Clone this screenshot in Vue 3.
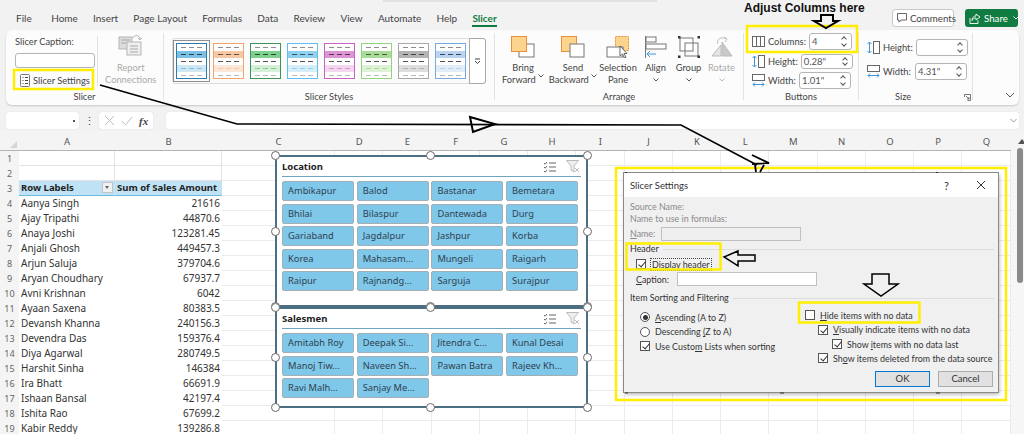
<script setup>
const tabs = ['File','Home','Insert','Page Layout','Formulas','Data','Review','View','Automate','Help','Slicer']
const thumbs = [
  { b:'#2e7aa8', f:'#7cc0e4', p:'#cfe6f3', d:'#1f3f55' },
  { b:'#f0a46e', f:'#f6c8a6', p:'#fbe6d8', d:'#6b4a35' },
  { b:'#3f9358', f:'#7fcf8e', p:'#d5efd9', d:'#1e4a2b' },
  { b:'#62bdee', f:'#8fd0ee', p:'#d6eefa', d:'#2d5870' },
  { b:'#c863c0', f:'#dc94d3', p:'#f3d7ef', d:'#5c2c58' },
  { b:'#93d27f', f:'#aadb9b', p:'#dff2d8', d:'#3d6331' },
  { b:'#a8a8a8', f:'#b4b4b4', p:'#dddddd', d:'#444444' },
  { b:'#7aa9dd', f:'#bcd3ef', p:'#e2ecf8', d:'#2e3f66' }
]
const columns = ['A','B','C','D','E','F','G','H','I','J','K','L','M','N','O','P','Q']
const emptyCols = columns.slice(2)
const rows = [
  ['',''],['',''],['Row Labels','Sum of Sales Amount'],
  ['Aanya Singh','21616'],['Ajay Tripathi','44870.6'],['Anaya Joshi','123281.45'],
  ['Anjali Ghosh','449457.3'],['Arjun Saluja','379704.6'],['Aryan Choudhary','67937.7'],
  ['Avni Krishnan','6042'],['Ayaan Saxena','80383.5'],['Devansh Khanna','240156.3'],
  ['Devendra Das','159376.4'],['Diya Agarwal','280749.5'],['Harshit Sinha','146384'],
  ['Ira Bhatt','66691.9'],['Ishaan Bansal','42197.4'],['Ishita Rao','67699.2'],['Kabir Reddy','139286.8']
]
const handles = ['tl','tc','tr','ml','mr','bl','bc','br']
const slicers = [
  { title:'Location', cls:'s-loc', items:['Ambikapur','Balod','Bastanar','Bemetara','Bhilai','Bilaspur','Dantewada','Durg','Gariaband','Jagdalpur','Jashpur','Korba','Korea','Mahasam...','Mungeli','Raigarh','Raipur','Rajnandg...','Sarguja','Surajpur'] },
  { title:'Salesmen', cls:'s-sal', items:['Amitabh Roy','Deepak Si...','Jitendra C...','Kunal Desai','Manoj Tiw...','Naveen Sh...','Pawan Batra','Rajeev Kh...','Ravi Malh...','Sanjay Me...'] }
]
</script>

<template>
  <div class="app">
    <div class="search-edge"></div>
    <div class="tabs">
      <span v-for="t in tabs" :key="t" class="tab" :class="{ active: t === 'Slicer', first: t === 'File' }">{{ t }}</span>
      <div class="top-actions">
        <span class="comments">
          <svg width="10" height="10" viewBox="0 0 10 10"><path d="M.5.500h9v6.500H4L2 9.200V7H.5z" fill="none" stroke="#555" stroke-width=".9"/></svg>
          Comments
        </span>
        <span class="share">
          <svg width="12" height="11" viewBox="0 0 12 11"><path d="M1 5v5.500h8V7.500M3 7.500c0-3 2-4.500 4-4.500V1l4 3-4 3V5C5 5 4 6 3 7.500z" fill="none" stroke="#fff" stroke-width=".9"/></svg>
          Share
          <svg class="share-caret" width="6" height="4" viewBox="0 0 6 4"><path d="M.5.500 3 3l2.500-2.500" fill="none" stroke="#fff"/></svg>
        </span>
      </div>
    </div>

    <div class="ribbon">
      <section class="group g-slicer">
        <div class="body slicer-body">
          <div class="caption-col">
            <div class="r-text">Slicer Caption:</div>
            <div class="caption-input"></div>
            <div class="settings-btn">
              <svg width="10" height="13" viewBox="0 0 10 13"><rect x=".5" y=".5" width="9" height="12" rx="1" fill="#fff" stroke="#777"/><path d="M2.500 3.500h1M5 3.500h3M2.500 6.500h1M5 6.500h3M2.500 9.500h1M5 9.500h3" stroke="#444"/></svg>
              <span class="r-text">Slicer Settings</span>
            </div>
          </div>
          <div class="report">
            <svg width="25" height="24" viewBox="0 0 25 24"><rect x="1" y="4" width="13" height="12" fill="#ddd" stroke="#b5b5b5"/><rect x="9" y="9" width="14" height="13" fill="#eee" stroke="#b5b5b5"/><path d="M3 7h9M3 10h5M12 13h8M12 16h8M12 19h8" stroke="#aaa"/><path d="M15 5c2-4 7-3 7 2M20 5l2 2 2-2" fill="none" stroke="#b5b5b5"/></svg>
            <span class="r-text dim">Report</span>
            <span class="r-text dim">Connections</span>
          </div>
        </div>
        <div class="g-label">Slicer</div>
      </section>

      <section class="group g-styles">
        <div class="body">
          <div class="gallery">
            <div v-for="(t, i) in thumbs" :key="i" class="thumb" :class="{ sel: i === 0 }">
              <svg width="31" height="36" viewBox="0 0 31 36">
                <rect x=".5" y=".5" width="30" height="35" fill="#fff" :stroke="t.b"/>
                <rect x="1" y="8" width="29" height="7" :fill="t.f"/>
                <rect x="1" y="22" width="29" height="7" :fill="t.p"/>
                <path d="M5 4.500h5M13 4.500h5M21 4.500h5" stroke="#8d8d8d"/>
                <path d="M5 11.500h5M13 11.500h5M21 11.500h5" :stroke="t.d"/>
                <path d="M5 18.500h5M13 18.500h5M21 18.500h5" stroke="#555"/>
                <path d="M5 25.500h5M13 25.500h5M21 25.500h5" :stroke="t.f"/>
                <path d="M5 32.500h5M13 32.500h5M21 32.500h5" stroke="#bbb"/>
              </svg>
            </div>
            <div class="gal-more">
              <svg width="7" height="7" viewBox="0 0 7 7"><path d="M1 1h5M1 3l2.500 2.500L6 3" fill="none" stroke="#444"/></svg>
            </div>
          </div>
        </div>
        <div class="g-label">Slicer Styles</div>
      </section>

      <section class="group g-arrange">
        <div class="body arrange-body">
          <div class="tool w-bring">
            <svg width="24" height="22" viewBox="0 0 24 22"><rect x="8" y="8" width="15" height="13" fill="#fff" stroke="#777"/><rect x=".5" y=".5" width="15" height="15" fill="#fcd48e" stroke="#e8913a"/></svg>
            <span class="r-text">Bring</span>
            <span class="r-text">Forward <svg class="chev" width="6" height="4" viewBox="0 0 6 4"><path d="M.5.500 3 3l2.500-2.500" fill="none" stroke="#555"/></svg></span>
          </div>
          <div class="tool w-send">
            <svg width="24" height="22" viewBox="0 0 24 22"><rect x=".5" y=".5" width="15" height="15" fill="#fcd48e" stroke="#e8913a"/><rect x="9" y="8" width="14" height="13" fill="#fff" stroke="#777"/></svg>
            <span class="r-text">Send</span>
            <span class="r-text">Backward <svg class="chev" width="6" height="4" viewBox="0 0 6 4"><path d="M.5.500 3 3l2.500-2.500" fill="none" stroke="#555"/></svg></span>
          </div>
          <div class="tool w-sel">
            <svg width="24" height="22" viewBox="0 0 24 22"><rect x="9.500" y=".5" width="13" height="14" fill="#fcd48e" stroke="#e8913a" stroke-dasharray="2 1"/><rect x="1" y="11" width="16" height="10" fill="#fff" stroke="#777"/><path d="M14 10v10l2.500-2 2 4 1.500-.8-2-3.700h3z" fill="#fff" stroke="#444" stroke-width=".8"/></svg>
            <span class="r-text">Selection</span>
            <span class="r-text">Pane</span>
          </div>
          <div class="tool w-small">
            <svg width="22" height="22" viewBox="0 0 22 22"><path d="M.5 0v22" stroke="#777"/><rect x="1" y="1" width="10" height="5" fill="#fff" stroke="#777"/><rect x="1" y="8" width="20" height="5" fill="#fff" stroke="#777"/><path d="M2 18h9M5 15l-3 3 3 3" fill="none" stroke="#3c96dc"/></svg>
            <span class="r-text">Align</span>
            <svg class="chev-b" width="6" height="4" viewBox="0 0 6 4"><path d="M.5.500 3 3l2.500-2.500" fill="none" stroke="#555"/></svg>
          </div>
          <div class="tool w-small">
            <svg width="22" height="22" viewBox="0 0 22 22"><rect x="2" y="2" width="13" height="13" fill="#fff" stroke="#777"/><rect x="7" y="7" width="13" height="13" fill="none" stroke="#777"/><g fill="#333"><rect x="0" y="0" width="2.500" height="2.500"/><rect x="19.500" y="0" width="2.500" height="2.500"/><rect x="0" y="19.500" width="2.500" height="2.500"/><rect x="19.500" y="19.500" width="2.500" height="2.500"/></g></svg>
            <span class="r-text">Group</span>
            <svg class="chev-b" width="6" height="4" viewBox="0 0 6 4"><path d="M.5.500 3 3l2.500-2.500" fill="none" stroke="#555"/></svg>
          </div>
          <div class="tool w-small">
            <svg width="22" height="22" viewBox="0 0 22 22"><path d="M1 20l9-11v11z" fill="#e4e4e4" stroke="#bbb"/><path d="M11 20V6l10 14z" fill="#c9c9c9" stroke="#bbb"/><path d="M7 8c-2-5 4-8 9-5M13 1l3 2-2 3" fill="none" stroke="#bbb"/></svg>
            <span class="r-text dim">Rotate</span>
            <svg class="chev-b" width="6" height="4" viewBox="0 0 6 4"><path d="M.5.500 3 3l2.500-2.500" fill="none" stroke="#bbb"/></svg>
          </div>
        </div>
        <div class="g-label">Arrange</div>
      </section>

      <section class="group g-buttons">
        <div class="body btn-body">
          <div class="field-row f-cols">
            <svg width="13" height="11" viewBox="0 0 13 11"><rect x=".5" y=".5" width="12" height="10" fill="#fff" stroke="#666"/><path d="M4.500 0v11M8.500 0v11" stroke="#666"/></svg>
            <span class="r-text">Columns:</span>
            <div class="spin w43"><span>4</span><i class="up"></i><i class="dn"></i></div>
          </div>
          <div class="field-row f-h">
            <svg width="13" height="13" viewBox="0 0 13 13"><path d="M2.500 1v11M.5 3l2-2 2 2M.5 10l2 2 2-2" fill="none" stroke="#3c96dc"/><rect x="6.500" y=".5" width="6" height="12" fill="#fff" stroke="#666"/></svg>
            <span class="r-text">Height:</span>
            <div class="spin w52"><span>0.28"</span><i class="up"></i><i class="dn"></i></div>
          </div>
          <div class="field-row f-w">
            <svg width="13" height="13" viewBox="0 0 13 13"><rect x=".5" y=".5" width="12" height="6" fill="#fff" stroke="#666"/><path d="M1 10.500h11M3 8.500l-2 2 2 2M10 8.500l2 2-2 2" fill="none" stroke="#3c96dc"/></svg>
            <span class="r-text">Width:</span>
            <div class="spin w52 tall"><span>1.01"</span><i class="up"></i><i class="dn"></i></div>
          </div>
        </div>
        <div class="g-label">Buttons</div>
      </section>

      <section class="group g-size">
        <div class="body size-body">
          <div class="field-row s-h">
            <svg width="13" height="13" viewBox="0 0 13 13"><path d="M2.500 1v11M.5 3l2-2 2 2M.5 10l2 2 2-2" fill="none" stroke="#3c96dc"/><rect x="6.500" y=".5" width="6" height="12" fill="#fff" stroke="#666"/></svg>
            <span class="r-text">Height:</span>
            <div class="spin w52 tall"><span></span><i class="up"></i><i class="dn"></i></div>
          </div>
          <div class="field-row s-w">
            <svg width="13" height="13" viewBox="0 0 13 13"><rect x=".5" y=".5" width="12" height="6" fill="#fff" stroke="#666"/><path d="M1 10.500h11M3 8.500l-2 2 2 2M10 8.500l2 2-2 2" fill="none" stroke="#3c96dc"/></svg>
            <span class="r-text">Width:</span>
            <div class="spin w52 tall"><span>4.31"</span><i class="up"></i><i class="dn"></i></div>
          </div>
        </div>
        <div class="g-label size-label">
          <span>Size</span>
          <svg width="7" height="7" viewBox="0 0 7 7"><path d="M.5 3V.5H6.500V6.500H3.500M2 2l3 3M3 5h2V3" fill="none" stroke="#555" stroke-width=".8"/></svg>
        </div>
      </section>

      <section class="collapse">
        <svg width="10" height="6" viewBox="0 0 10 6"><path d="M1 1l4 4 4-4" fill="none" stroke="#555"/></svg>
      </section>
    </div>

    <div class="formula">
      <div class="name-box"><span class="dot-caret"></span></div>
      <div class="fdots">⋮</div>
      <div class="fx-box">
        <svg width="11" height="11" viewBox="0 0 11 11"><path d="M1 1l9 9M10 1l-9 9" stroke="#bdbdbd" fill="none"/></svg>
        <svg width="12" height="10" viewBox="0 0 12 10"><path d="M1 5l3.500 4L11 1" stroke="#bdbdbd" fill="none"/></svg>
        <em>fx</em>
      </div>
      <div class="formula-input">
        <svg width="7" height="5" viewBox="0 0 7 5"><path d="M.5 1l3 3 3-3" fill="none" stroke="#999"/></svg>
      </div>
    </div>

    <div class="sheet">
      <div class="corner"><i></i></div>
      <div v-for="c in columns" :key="c" class="col-h">{{ c }}</div>
      <div class="sb-top"><i></i></div>
      <template v-for="(r, i) in rows" :key="i">
        <div class="row-h">{{ i + 1 }}</div>
        <div class="cell" :class="{ pv: i === 2, plain: i > 2, top: i < 2 }">
          <span>{{ r[0] }}</span>
          <i v-if="i === 2" class="filter"></i>
        </div>
        <div class="cell num" :class="{ pv: i === 2, plain: i > 2, top: i < 2 }">{{ r[1] }}</div>
        <div v-for="c in emptyCols" :key="c" class="cell"></div>
        <div class="sb"></div>
      </template>
    </div>
    <div class="sb-thumb"></div>

    <div v-for="s in slicers" :key="s.title" class="slicer" :class="s.cls">
      <div class="s-head">
        <span class="s-title">{{ s.title }}</span>
        <svg width="13" height="12" viewBox="0 0 13 12"><path d="M1 2l1.200 1.200L4 1M1 6l1.200 1.200L4 5M1 10l1.200 1.200L4 9M6 2h7M6 6h7M6 10h7" fill="none" stroke="#666"/></svg>
        <svg width="14" height="13" viewBox="0 0 14 13"><path d="M.5.500h12L8 6v6L5 10V6z" fill="#eee" stroke="#bbb"/><path d="M9 8l4 4M13 8l-4 4" stroke="#bbb"/></svg>
      </div>
      <div class="s-grid">
        <div v-for="it in s.items" :key="it" class="s-btn">{{ it }}</div>
      </div>
      <i v-for="h in handles" :key="h" class="handle" :class="h"></i>
    </div>

    <div class="ghost"><i></i><i></i><i></i><i></i></div>

    <div class="dialog">
      <div class="d-title">
        <span class="d-name">Slicer Settings</span>
        <span class="d-q">?</span>
        <svg width="10" height="10" viewBox="0 0 10 10"><path d="M1 1l8 8M9 1l-8 8" stroke="#333" fill="none"/></svg>
      </div>
      <div class="d-body">
        <div class="d-line muted">Source Name:</div>
        <div class="d-line muted">Name to use in formulas:</div>
        <div class="d-name-row muted"><span class="lbl-name"><u>N</u>ame:</span><div class="d-input off"></div></div>
        <div class="d-sec d-header"><span>Header</span><i></i></div>
        <label class="d-chk d-disp"><span class="chk on"></span><span class="focus"><u>D</u>isplay header</span></label>
        <div class="d-cap"><span class="lbl-cap"><u>C</u>aption:</span><div class="d-input"></div></div>
        <div class="d-sec d-sort"><span>Item Sorting and Filtering</span><i></i></div>
        <div class="d-cols">
          <div class="d-left">
            <label class="d-chk"><span class="rad on"></span><span><u>A</u>scending (A to Z)</span></label>
            <label class="d-chk"><span class="rad"></span><span>Descending <u>(</u>Z to A)</span></label>
            <label class="d-chk"><span class="chk on"></span><span>Use Custo<u>m</u> Lists when sorting</span></label>
          </div>
          <div class="d-right">
            <label class="d-chk"><span class="chk"></span><span><u>H</u>ide items with no data</span></label>
            <label class="d-chk in1"><span class="chk on"></span><span><u>V</u>isually indicate items with no data</span></label>
            <label class="d-chk in2"><span class="chk on"></span><span>Show <u>i</u>tems with no data last</span></label>
            <label class="d-chk in1"><span class="chk on"></span><span>Sh<u>o</u>w items deleted from the data source</span></label>
          </div>
        </div>
        <div class="d-actions">
          <span class="d-btn ok">OK</span>
          <span class="d-btn">Cancel</span>
        </div>
      </div>
    </div>

    <svg class="marks" width="1024" height="434" viewBox="0 0 1024 434">
      <g fill="none" stroke="#ffee00" stroke-width="2.500">
        <rect x="14" y="70" width="79" height="19"/>
        <rect x="747" y="26" width="110" height="26"/>
        <rect x="616" y="168" width="390" height="232"/>
        <rect x="626.500" y="243.500" width="94" height="26"/>
        <rect x="799" y="302.500" width="120.500" height="20"/>
      </g>
      <path d="M625 393h3M780 393h4M936 393h4M625 172.500h2M936 172.500h2" stroke="#333" stroke-width="1.200" fill="none"/>
      <g fill="none" stroke="#000">
        <path d="M100 85 237 124 681 125 757 165" stroke-width="1.600"/>
        <path d="M470 117 495 124 473 132z" stroke-width="2"/>
        <path d="M752 155 769 163 752 164M755 165 756 172M764 165 760 172" stroke-width="1.800"/>
        <path d="M821 15h12v6h5l-12 7-12-7h7z" stroke-width="2"/>
        <path d="M724 257l14-6v4h17v6h-17v5z" stroke-width="1.500"/>
        <path d="M872 274h17v10h9l-17 12-17-12h8z" stroke-width="1.500"/>
      </g>
    </svg>
    <div class="adjust">Adjust Columns here</div>
  </div>
</template>

<style>
html, body { margin: 0; padding: 0; }
</style>

<style scoped>
.app {
  position: relative;
  width: 1024px;
  height: 434px;
  overflow: hidden;
  background: #f2f2f2;
  font-family: "Noto Sans", "Liberation Sans", sans-serif;
  color: #333;
}
svg { flex: none; }
.search-edge { height: 2px; width: 274px; margin-left: 383px; background: #e2e2e2; }

/* tabs */
.tabs { display: flex; height: 28px; padding-left: 16px; font-family: Lato, sans-serif; font-size: 10px; color: #444; align-items: flex-start; }
.tab { margin-right: 15.200px; padding-top: 9px; line-height: 14px; height: 16px; }
.tab.first { margin-right: 19.500px; }
.tab.active { color: #107c41; font-weight: 700; margin-right: 0; border-bottom: 2px solid #107c41; height: 14px; }
.top-actions { margin-left: auto; display: flex; gap: 11px; padding: 7px 6px 0 0; }
.comments, .share { display: flex; align-items: center; gap: 3px; height: 18px; border-radius: 3px; font-size: 9.700px; box-sizing: border-box; }
.comments { width: 62px; padding-left: 4px; background: #fff; border: 1px solid #c8c8c8; color: #444; }
.share { width: 53px; padding-left: 4px; background: #107c41; color: #fff; }
.share-caret { margin-left: 2px; }

/* ribbon */
.ribbon {
  display: flex;
  height: 75px;
  margin: 0 5px 0 6px;
  background: #fcfcfc;
  border-radius: 6px;
  box-shadow: 0 1px 2px rgba(0,0,0,.18);
  font-family: Lato, sans-serif;
}
.group { position: relative; display: flex; flex-direction: column; box-sizing: border-box; border-right: 1px solid #e3e3e3; margin: 3px 0 5px; }
.body { flex: 1; min-height: 0; }
.g-label { height: 14px; margin-bottom: -4px; line-height: 14px; font-size: 9.300px; text-align: center; color: #444; flex: none; }
.r-text { font-size: 9.300px; line-height: 12px; color: #444; white-space: nowrap; }
.dim { color: #aaa; }
.g-slicer { width: 158px; }
.slicer-body { display: flex; }
.caption-col { width: 93px; padding: 0 0 0 9px; box-sizing: border-box; border-right: 1px solid #e3e3e3; height: 50px; margin-top: 3px; }
.caption-input { width: 80px; height: 15px; margin-top: 5px; background: #fff; border: 1px solid #b5b5b5; border-radius: 3px; box-sizing: border-box; }
.settings-btn { display: flex; align-items: center; gap: 3px; margin: 6px 0 0 5px; height: 13px; }
.report { display: flex; flex-direction: column; align-items: center; width: 65px; }
.report svg { margin-bottom: 5px; }
.g-styles { width: 331px; }
.gallery { display: flex; width: 314px; height: 46px; margin: 5px 0 0 8px; box-sizing: border-box; border: 1px solid #dcdcdc; border-radius: 3px; padding: 4px 0 0 3px; background: #fbfbfb; position: relative; gap: 6px; }
.thumb { width: 31px; height: 36px; flex: none; position: relative; }
.thumb svg { display: block; }
.thumb.sel { outline: 1.500px solid #8f8f8f; outline-offset: 2px; }
.gal-more { position: absolute; right: -1px; top: -1px; width: 17px; height: 46px; box-sizing: border-box; border: 1px solid #a8a8a8; border-radius: 0 3px 3px 0; background: #fff; display: flex; align-items: center; justify-content: center; }
.g-arrange { width: 249px; }
.arrange-body { display: flex; padding-left: 8px; }
.tool { display: flex; flex-direction: column; align-items: center; padding-top: 3px; box-sizing: border-box; }
.tool svg:first-child { margin-bottom: 4px; }
.w-bring { width: 40px; margin-right: 6px; }
.w-send { width: 48px; margin-right: 0; }
.w-sel { width: 42px; }
.w-small { width: 33px; }
.chev { vertical-align: 1px; }
.chev-b { margin-top: 4px; }
.g-buttons { width: 115px; }
.field-row { display: flex; align-items: center; gap: 3px; }
.spin { position: relative; box-sizing: border-box; height: 15px; background: #fff; border: 1px solid #b5b5b5; border-radius: 3px; font-size: 9.500px; line-height: 13px; padding-left: 2px; color: #555; flex: none; margin-left: auto; }
.spin.tall { height: 17px; line-height: 15px; }
.w43 { width: 43px; height: 17px; line-height: 15px; }
.w52 { width: 52px; }
.spin i { position: absolute; right: 5px; width: 3px; height: 3px; border-left: 1px solid #555; border-top: 1px solid #555; transform: rotate(45deg); }
.spin i.up { top: 3px; }
.spin i.dn { bottom: 3px; transform: rotate(225deg); }
.btn-body { padding: 0 7px 0 8px; }
.f-cols { height: 17px; margin-top: 0; }
.f-h { height: 15px; margin-top: 4px; }
.f-w { height: 17px; margin-top: 3px; }
.g-size { width: 114px; }
.size-body { padding: 6px 5px 0 8px; }
.s-w { margin-top: 7px; }
.size-label { display: flex; align-items: center; padding: 0 1px 0 36px; }
.size-label svg { margin-left: auto; }
.collapse { flex: 1; display: flex; align-items: flex-end; justify-content: flex-end; padding: 0 4px 7px 0; }

/* formula */
.formula { display: flex; height: 17px; margin: 7px 5px 2px 6px; }
.name-box, .fx-box, .formula-input { background: #fff; border-radius: 3px; box-shadow: 0 0 1px rgba(0,0,0,.2); position: relative; }
.name-box { width: 73px; }
.dot-caret { position: absolute; right: 4px; top: 8px; width: 2px; height: 2px; background: #555; }
.fdots { width: 20px; text-align: center; font-size: 11px; line-height: 17px; color: #444; }
.fx-box { width: 54px; display: flex; align-items: center; gap: 6px; padding-left: 5px; box-sizing: border-box; }
.fx-box em { font-family: "Liberation Serif", serif; font-weight: 700; font-size: 11px; color: #444; }
.formula-input { margin-left: 13px; flex: 1; display: flex; align-items: center; justify-content: flex-end; padding-right: 2px; }

/* sheet */
.sheet {
  display: grid;
  grid-template-columns: 19px 96px 107px 113px repeat(14, 48.250px) 1fr;
  grid-template-rows: 19.500px repeat(19, 15.060px);
  background: #fff;
  font-size: 10px;
}
.corner, .col-h { background: #f4f4f4; border-bottom: 1px solid #b4b4b4; box-sizing: border-box; }
.corner { position: relative; }
.corner i { position: absolute; right: 2px; bottom: 2px; width: 0; height: 0; border-left: 7px solid transparent; border-bottom: 7px solid #d6d6d6; }
.col-h { text-align: center; line-height: 22px; font-size: 9.500px; color: #555; overflow: hidden; }
.sb-top { background: #f4f4f4; position: relative; }
.sb-top i { position: absolute; left: 7px; top: 8px; border-left: 4px solid transparent; border-right: 4px solid transparent; border-bottom: 5px solid #555; }
.row-h { background: #f4f4f4; text-align: center; font-size: 9px; line-height: 15px; color: #666; overflow: hidden; }
.cell { box-sizing: border-box; border-right: 1px solid #ebebeb; border-bottom: 1px solid #ebebeb; line-height: 14px; padding: 0 2px; white-space: nowrap; overflow: hidden; color: #333; min-width: 0; }
.cell.num { text-align: right; padding-right: 1px; }
.cell.top { border-color: #e3e3e3; }
.cell.plain { border-color: transparent; }
.cell.pv { background: #c0e2f5; font-weight: 700; font-size: 9.500px; color: #222; border-color: transparent; border-bottom: 1px solid #6fb8df; position: relative; }
.cell.pv.num { padding-right: 5px; }
.filter { position: absolute; right: 1px; top: 1px; width: 11px; height: 11px; background: #f0f0f0; border: 1px solid #c4c4c4; box-sizing: border-box; }
.filter::after { content: ""; position: absolute; left: 2px; top: 3px; border-left: 2.500px solid transparent; border-right: 2.500px solid transparent; border-top: 3px solid #666; }
.sb { background: #f6f6f6; }
.sb-thumb { position: absolute; left: 1017px; top: 148px; width: 6px; height: 135px; border-radius: 3px; background: #8a8a8a; }

/* slicers */
.slicer { position: absolute; left: 275px; width: 313px; box-sizing: border-box; background: #fff; border: 2px solid #4d6f83; padding: 0 5px; }
.s-loc { top: 155px; height: 152px; }
.s-sal { top: 307px; height: 101px; }
.s-head { display: flex; align-items: center; gap: 10px; height: 20px; border-bottom: 1px solid #6fa6bf; padding-right: 1px; box-sizing: border-box; margin-bottom: 4px; }
.s-title { font-size: 9.500px; font-weight: 700; color: #222; margin-right: auto; }
.s-grid { display: grid; grid-template-columns: repeat(4, 72px); column-gap: 2.700px; row-gap: 2.600px; }
.s-btn { box-sizing: border-box; height: 20px; background: #7fc8ea; border: 1px solid #a3aeb5; border-radius: 2px; font-size: 9.300px; line-height: 18px; padding-left: 5px; color: #2f4150; white-space: nowrap; overflow: hidden; }
.handle { position: absolute; width: 9px; height: 9px; box-sizing: border-box; border-radius: 50%; background: #fff; border: 1.500px solid #6b6b6b; }
.tl { left: -6px; top: -6px; } .tc { left: 149px; top: -6px; } .tr { right: -6px; top: -6px; }
.ml { left: -6px; top: calc(50% - 4.500px); } .mr { right: -6px; top: calc(50% - 4.500px); }
.bl { left: -6px; bottom: -6px; } .bc { left: 149px; bottom: -6px; } .br { right: -6px; bottom: -6px; }

/* dialog */
.ghost { position: absolute; left: 631px; top: 171.500px; width: 299px; display: flex; gap: 2px; }
.ghost i { flex: 1; height: 2px; background: #4f8fae; }
.dialog { position: absolute; left: 624px; top: 173px; width: 374px; height: 219px; background: #f0f0f0; box-shadow: 0 0 0 1px #8a8a8a, 1px 2px 4px rgba(0,0,0,.35); font-size: 8.900px; color: #333; font-family: Lato, sans-serif; }
.d-title { height: 24px; background: #fff; display: flex; align-items: center; padding: 0 12px 0 6px; }
.d-name { font-size: 9.500px; margin-right: auto; }
.d-q { margin-right: 27px; font-size: 11px; }
.d-body { padding: 4px 4px 0 6px; }
.d-line { line-height: 12px; }
.muted { color: #8a8a8a; }
.d-name-row { display: flex; align-items: center; height: 15px; margin-top: 1px; }
.lbl-name { width: 31px; }
.d-input { width: 140px; height: 14px; box-sizing: border-box; background: #fff; border: 1px solid #c0c0c0; }
.d-input.off { background: #efefef; }
.d-sec { display: flex; align-items: center; gap: 4px; line-height: 12px; }
.d-sec i { flex: 1; height: 1px; background: #dcdcdc; }
.d-header { margin-top: 2px; }
.d-chk { display: flex; align-items: center; gap: 5px; height: 14.300px; white-space: nowrap; }
.d-disp { padding-left: 6px; margin-top: 2px; }
.focus { outline: 1px dotted #444; padding: 0 1px; line-height: 11px; margin-left: 0; }
.d-cap { display: flex; align-items: center; height: 14px; margin-top: 1px; padding-left: 6px; }
.lbl-cap { width: 41px; }
.d-sort { margin-top: 6px; }
.d-cols { display: flex; }
.d-left { flex: none; width: 175px; padding: 6px 0 0 10px; box-sizing: border-box; }
.d-right { padding-top: 4px; }
.in1 { padding-left: 13px; }
.in2 { padding-left: 27px; }
.chk, .rad { position: relative; flex: none; width: 10px; height: 10px; box-sizing: border-box; background: #fff; border: 1px solid #555; }
.rad { border-radius: 50%; }
.rad.on::after { content: ""; position: absolute; left: 1.500px; top: 1.500px; width: 5px; height: 5px; border-radius: 50%; background: #333; }
.chk.on::after { content: ""; position: absolute; left: 2.500px; top: 0; width: 3px; height: 6px; border-right: 1px solid #333; border-bottom: 1px solid #333; transform: rotate(40deg); }
.d-actions { display: flex; justify-content: flex-end; gap: 8px; padding-right: 1px; margin-top: 6px; }
.d-btn { width: 55px; height: 15.500px; box-sizing: border-box; background: #e1e1e1; border: 1px solid #adadad; text-align: center; line-height: 14px; font-size: 9.500px; }
.d-btn.ok { border: 1.500px solid #0078d4; line-height: 13px; }

.marks { position: absolute; left: 0; top: 0; pointer-events: none; }
.adjust { position: absolute; left: 744px; top: 0; font-family: "Liberation Sans", sans-serif; font-weight: 700; font-size: 12px; line-height: 16px; color: #111; white-space: nowrap; }
</style>
